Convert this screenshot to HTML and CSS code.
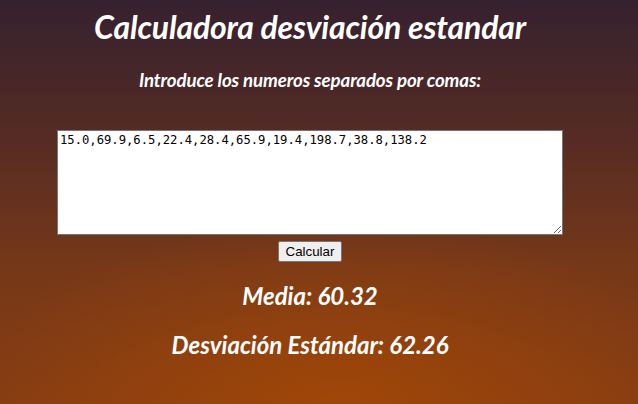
FILE: index.html
```html
<!DOCTYPE html>
<html lang="es">
<head>
<meta charset="utf-8">
<title>Calculadora desviación estandar</title>
<link rel="stylesheet" href="styles.css">
</head>
<body>
<main class="page">
  <h1 class="title">Calculadora desviación estandar</h1>
  <h3 class="subtitle">Introduce los numeros separados por comas:</h3>
  <textarea class="numbers">15.0,69.9,6.5,22.4,28.4,65.9,19.4,198.7,38.8,138.2</textarea>
  <div class="actions"><button class="calc" type="button">Calcular</button></div>
  <h2 class="result result-first">Media: 60.32</h2>
  <h2 class="result">Desviación Estándar: 62.26</h2>
</main>
</body>
</html>
```

FILE: styles.css
```css
html, body {
  margin: 0;
  height: 100%;
}
body {
  font-family: Lato, "Open Sans", sans-serif;
  color: #fff;
  background:
    radial-gradient(ellipse 60% 45% at 53% 100%, rgba(165, 72, 6, 0.85), rgba(165, 72, 6, 0) 100%),
    linear-gradient(to bottom, #35212f 0%, #552b24 33%, #763818 66%, #853c13 100%);
  overflow: hidden;
}
.page {
  width: 620px;
  display: flex;
  flex-direction: column;
  align-items: center;
  text-align: center;
}
.title {
  font-size: 32px;
  font-weight: 700;
  font-style: italic;
  line-height: 1.2;
  letter-spacing: -0.16px;
  margin: 8px 0 0;
}
.subtitle {
  font-size: 18.72px;
  font-weight: 700;
  font-style: italic;
  line-height: 1.2;
  letter-spacing: -0.12px;
  margin: 23px 0 0;
}
.numbers {
  display: block;
  box-sizing: border-box;
  width: 506px;
  height: 105px;
  margin: 38px 0 0;
  padding: 2px;
  border: 1px solid #767676;
  background: #fff;
  color: #000;
  font-family: "DejaVu Sans Mono", monospace;
  font-size: 12.2px;
  line-height: 1.25;
  resize: both;
}
.actions {
  margin-top: 5px;
}
.calc {
  box-sizing: border-box;
  width: 64px;
  height: 21px;
  padding: 1px 6px;
  font-family: "Liberation Sans", Arial, sans-serif;
  font-size: 13.33px;
  color: #000;
  background: #efefef;
  border: 1px solid #767676;
  border-radius: 2px;
}
.result {
  font-size: 24px;
  font-weight: 700;
  font-style: italic;
  line-height: 1.2;
  margin: 20px 0 0;
}
```
